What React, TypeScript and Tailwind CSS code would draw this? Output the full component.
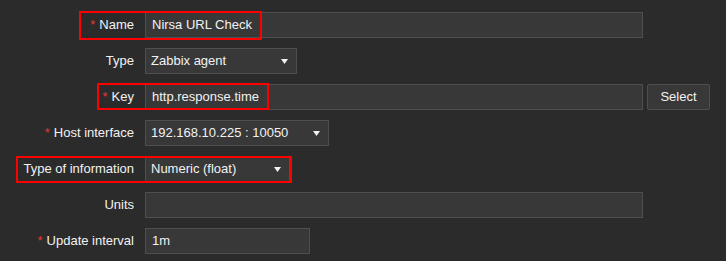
import React from "react";

const Arrow = () => (
  <svg width="7" height="5" viewBox="0 0 7 5" className="absolute right-[8px] top-[10px]">
    <polygon points="0,0 7,0 3.5,5" fill="#f2f2f2" />
  </svg>
);

const Label = ({ text, req }: { text: string; req?: boolean }) => (
  <div className="w-[135px] shrink-0 text-right pr-[1px] leading-[26px]">
    {req && <span className="text-[#e33734] mr-[4px]">*</span>}
    {text}
  </div>
);

const Input = ({ value, w }: { value?: string; w: string }) => (
  <div className={`${w} h-[26px] bg-[#383838] border border-[#4f4f4f] px-[6px] leading-[24px] whitespace-nowrap`}>
    {value}
  </div>
);

const Select = ({ value, w }: { value: string; w: string }) => (
  <div className={`${w} relative h-[26px] bg-[#383838] border border-[#4f4f4f] pl-[5px] leading-[24px] whitespace-nowrap`}>
    {value}
    <Arrow />
  </div>
);

export default function App() {
  return (
    <div
      className="relative w-[726px] h-[261px] bg-[#2b2b2b] text-[#f2f2f2] text-[13px] pt-[12px] overflow-hidden"
      style={{ fontFamily: '"Liberation Sans", Arial, sans-serif' }}
    >
      <div className="flex flex-col gap-[10px]">
        <div className="flex gap-[10px]">
          <Label text="Name" req />
          <Input value="Nirsa URL Check" w="w-[498px]" />
        </div>
        <div className="flex gap-[10px]">
          <Label text="Type" />
          <Select value="Zabbix agent" w="w-[152px]" />
        </div>
        <div className="flex gap-[10px]">
          <Label text="Key" req />
          <div className="flex gap-[4px]">
            <Input value="http.response.time" w="w-[498px]" />
            <button className="w-[63px] h-[26px] bg-[#383838] border border-[#4f4f4f] rounded-[2px] text-[#f2f2f2] leading-[24px]">
              Select
            </button>
          </div>
        </div>
        <div className="flex gap-[10px]">
          <Label text="Host interface" req />
          <Select value="192.168.10.225 : 10050" w="w-[184px]" />
        </div>
        <div className="flex gap-[10px]">
          <Label text="Type of information" />
          <Select value="Numeric (float)" w="w-[145px]" />
        </div>
        <div className="flex gap-[10px]">
          <Label text="Units" />
          <Input w="w-[498px]" />
        </div>
        <div className="flex gap-[10px]">
          <Label text="Update interval" req />
          <Input value="1m" w="w-[165px]" />
        </div>
      </div>

      <div className="absolute left-[79px] top-[11px] w-[183px] h-[29px] border-2 border-[#ff0000]" />
      <div className="absolute left-[97px] top-[83px] w-[172px] h-[27px] border-2 border-[#ff0000]" />
      <div className="absolute left-[16px] top-[156px] w-[276px] h-[27px] border-2 border-[#ff0000]" />
    </div>
  );
}
